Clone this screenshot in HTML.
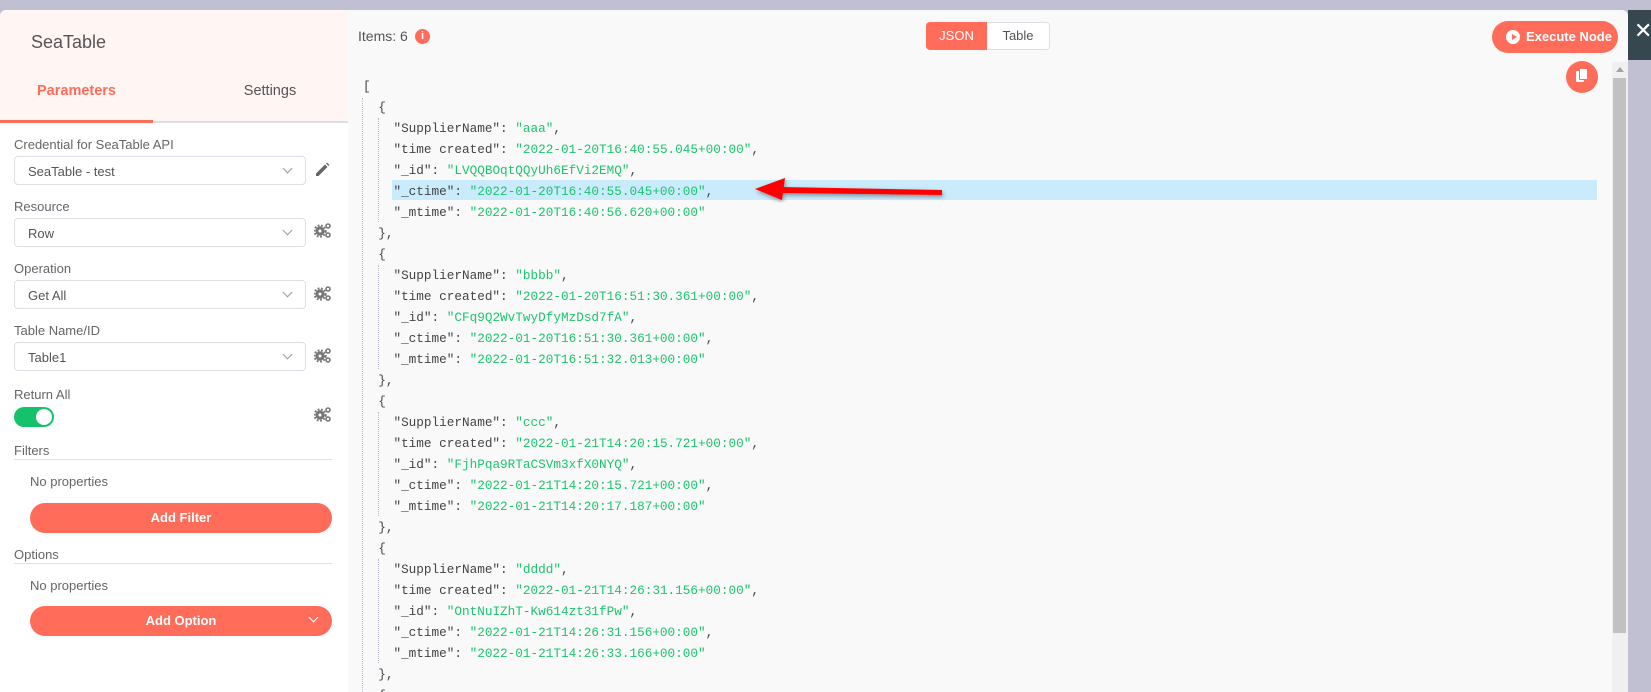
<!DOCTYPE html>
<html><head><meta charset="utf-8"><style>
*{box-sizing:border-box;margin:0;padding:0}
html,body{width:1651px;height:692px;overflow:hidden}
body{background:#c1c0d2;font-family:"Liberation Sans",sans-serif;position:relative;color:#555}
.abs{position:absolute}
#left{left:0;top:10px;width:348px;bottom:0;background:#fff;border-top-left-radius:6px;overflow:hidden}
#hdr{left:0;top:0;width:348px;height:113px;background:#fff5f3}
.lbl{position:absolute;left:14px;font-size:13px;color:#666}
.inp{position:absolute;left:14px;width:292px;height:29px;border:1px solid #dcdfe6;border-radius:4px;background:#fff;font-size:13px;color:#555;padding:7px 13px}
.inp:after{content:"";position:absolute;right:14px;top:8px;width:6px;height:6px;border-right:1px solid #999;border-bottom:1px solid #999;transform:rotate(45deg)}
.btn{position:absolute;left:30px;width:302px;height:30px;border-radius:15px;background:#ff6d5a;color:#fff;font-weight:bold;font-size:13px;text-align:center;line-height:30px}
#right{left:348px;top:10px;width:1280px;bottom:0;background:#f9f9f9;border-top-right-radius:6px}
pre{position:absolute;left:363px;top:76px;font-family:"Liberation Mono",monospace;font-size:12.7px;line-height:21px;color:#444;white-space:pre}
.s{color:#1cc56d}
</style></head><body>
<div class="abs" id="left">
 <div class="abs" id="hdr"></div>
 <div class="abs" style="left:31px;top:22px;font-size:18px;color:#555">SeaTable</div>
 <div class="abs" style="left:0;width:153px;top:73px;text-align:center;font-size:14.5px;font-weight:bold;color:#ff6d5a">Parameters</div>
 <div class="abs" style="left:195px;width:150px;top:73px;text-align:center;font-size:14.5px;color:#555">Settings</div>
 <div class="abs" style="left:0;top:111px;width:348px;height:2px;background:#dcdfe6"></div>
 <div class="abs" style="left:0;top:110px;width:153px;height:3px;background:#ff6d5a"></div>
</div>
<div class="lbl" style="top:137px">Credential for SeaTable API</div>
<div class="inp" style="top:156px">SeaTable - test</div>
<svg class="abs" style="left:314px;top:162px" width="16" height="16" viewBox="0 0 16 16"><path d="M2 11.5L11 2.5l2.5 2.5-9 9H2z" fill="#666"/><path d="M12 1.5l1-1 2.5 2.5-1 1z" fill="#666"/></svg>
<div class="lbl" style="top:199px">Resource</div>
<div class="inp" style="top:218px">Row</div>
<div class="lbl" style="top:261px">Operation</div>
<div class="inp" style="top:280px">Get All</div>
<div class="lbl" style="top:323px">Table Name/ID</div>
<div class="inp" style="top:342px">Table1</div>
<div class="lbl" style="top:387px">Return All</div>
<div class="abs" style="left:14px;top:407px;width:40px;height:20px;border-radius:10px;background:#13c26b"></div>
<div class="abs" style="left:36px;top:409px;width:16px;height:16px;border-radius:8px;background:#fff"></div>
<svg width="0" height="0" style="position:absolute"><defs><g id="gear"><circle cx="6" cy="9" r="4.6" fill="#777"/><circle cx="6" cy="9" r="5.6" fill="none" stroke="#777" stroke-width="2" stroke-dasharray="1.8 1.6"/><circle cx="6" cy="9" r="1.5" fill="#fff"/><circle cx="14" cy="4" r="2" fill="none" stroke="#777" stroke-width="1.6"/><circle cx="14" cy="13" r="2" fill="none" stroke="#777" stroke-width="1.6"/></g></defs></svg>
<svg class="abs" style="left:314px;top:222px" width="18" height="18"><use href="#gear"/></svg>
<svg class="abs" style="left:314px;top:285px" width="18" height="18"><use href="#gear"/></svg>
<svg class="abs" style="left:314px;top:347px" width="18" height="18"><use href="#gear"/></svg>
<svg class="abs" style="left:314px;top:406px" width="18" height="18"><use href="#gear"/></svg>
<div class="lbl" style="top:443px">Filters</div>
<div class="abs" style="left:14px;top:459px;width:318px;height:1px;background:#dcdfe6"></div>
<div class="lbl" style="top:474px;left:30px">No properties</div>
<div class="btn" style="top:503px">Add Filter</div>
<div class="lbl" style="top:547px">Options</div>
<div class="abs" style="left:14px;top:563px;width:318px;height:1px;background:#dcdfe6"></div>
<div class="lbl" style="top:578px;left:30px">No properties</div>
<div class="btn" style="top:606px">Add Option</div>
<div class="abs" style="left:310px;top:614px;width:7px;height:7px;border-right:1.5px solid #fff;border-bottom:1.5px solid #fff;transform:rotate(45deg)"></div>

<div class="abs" id="right"></div>
<div class="abs" style="left:358px;top:28px;font-size:14px;color:#555">Items: 6</div>
<div class="abs" style="left:415px;top:29px;width:15px;height:15px;border-radius:8px;background:#ff6d5a;color:#fff;font-size:11px;font-weight:bold;text-align:center;line-height:15px">i</div>
<div class="abs" style="left:926px;top:22px;width:61px;height:28px;background:#ff6d5a;border-radius:4px 0 0 4px;color:#fff;font-size:13px;text-align:center;line-height:28px">JSON</div>
<div class="abs" style="left:987px;top:22px;width:63px;height:28px;background:#fff;border:1px solid #dcdfe6;border-left:none;border-radius:0 4px 4px 0;color:#555;font-size:13px;text-align:center;line-height:26px">Table</div>
<div class="abs" style="left:1492px;top:21px;width:126px;height:32px;border-radius:16px;background:#ff6d5a;color:#fff;font-size:13px;font-weight:bold;line-height:32px;padding-left:34px">Execute Node</div>
<div class="abs" style="left:1506px;top:30px;width:14px;height:14px;border-radius:7px;background:#fff"></div>
<div class="abs" style="left:1512px;top:33.5px;width:0;height:0;border-left:5px solid #ff6d5a;border-top:3.5px solid transparent;border-bottom:3.5px solid transparent"></div>
<div class="abs" style="left:1566px;top:61px;width:32px;height:32px;border-radius:16px;background:#ff6d5a"></div>
<div class="abs" style="left:1576px;top:71px;width:8px;height:11px;background:#fff;border-radius:1px"></div>
<div class="abs" style="left:1579px;top:68px;width:9px;height:12px;background:#fff;border:1px solid #ff6d5a;border-radius:1px"></div>
<div class="abs" style="left:1612px;top:62px;width:16px;height:630px;background:#f0f0f0"></div>
<div class="abs" style="left:1616px;top:67px;width:0;height:0;border-bottom:5px solid #a3a3a3;border-left:4px solid transparent;border-right:4px solid transparent"></div>
<div class="abs" style="left:1613px;top:78px;width:13px;height:555px;background:#c1c1c1"></div>
<div class="abs" style="left:1628px;top:10px;width:23px;height:50px;background:#37474f"></div>
<div class="abs" style="left:1634px;top:20px;color:#fff;font-size:22px;line-height:22px">✕</div>
<div class="abs" style="left:362px;top:98px;width:0;height:594px;border-left:1px dotted #bbc"></div>
<div class="abs" style="left:378px;top:118px;width:0;height:104px;border-left:1px dotted #bbc"></div>
<div class="abs" style="left:378px;top:265px;width:0;height:104px;border-left:1px dotted #bbc"></div>
<div class="abs" style="left:378px;top:412px;width:0;height:104px;border-left:1px dotted #bbc"></div>
<div class="abs" style="left:378px;top:559px;width:0;height:104px;border-left:1px dotted #bbc"></div>
<div class="abs" style="left:392px;top:180px;width:1205px;height:20px;background:#c9ebfc"></div>
<pre>[
  {
    "SupplierName": <span class="s">"aaa"</span>,
    "time created": <span class="s">"2022-01-20T16:40:55.045+00:00"</span>,
    "_id": <span class="s">"LVQQBOqtQQyUh6EfVi2EMQ"</span>,
    "_ctime": <span class="s">"2022-01-20T16:40:55.045+00:00"</span>,
    "_mtime": <span class="s">"2022-01-20T16:40:56.620+00:00"</span>
  },
  {
    "SupplierName": <span class="s">"bbbb"</span>,
    "time created": <span class="s">"2022-01-20T16:51:30.361+00:00"</span>,
    "_id": <span class="s">"CFq9Q2WvTwyDfyMzDsd7fA"</span>,
    "_ctime": <span class="s">"2022-01-20T16:51:30.361+00:00"</span>,
    "_mtime": <span class="s">"2022-01-20T16:51:32.013+00:00"</span>
  },
  {
    "SupplierName": <span class="s">"ccc"</span>,
    "time created": <span class="s">"2022-01-21T14:20:15.721+00:00"</span>,
    "_id": <span class="s">"FjhPqa9RTaCSVm3xfX0NYQ"</span>,
    "_ctime": <span class="s">"2022-01-21T14:20:15.721+00:00"</span>,
    "_mtime": <span class="s">"2022-01-21T14:20:17.187+00:00"</span>
  },
  {
    "SupplierName": <span class="s">"dddd"</span>,
    "time created": <span class="s">"2022-01-21T14:26:31.156+00:00"</span>,
    "_id": <span class="s">"OntNuIZhT-Kw614zt31fPw"</span>,
    "_ctime": <span class="s">"2022-01-21T14:26:31.156+00:00"</span>,
    "_mtime": <span class="s">"2022-01-21T14:26:33.166+00:00"</span>
  },
  {</pre>
<svg class="abs" style="left:740px;top:170px" width="220" height="40"><defs><filter id="sh"><feDropShadow dx="1" dy="2" stdDeviation="2" flood-opacity="0.4"/></filter></defs><g filter="url(#sh)"><path d="M40 17 L202 20 L202 25 L40 23 Z" fill="#f00"/><path d="M15 19 L45 8 L42 30 Z" fill="#f00"/></g></svg>
</body></html>
